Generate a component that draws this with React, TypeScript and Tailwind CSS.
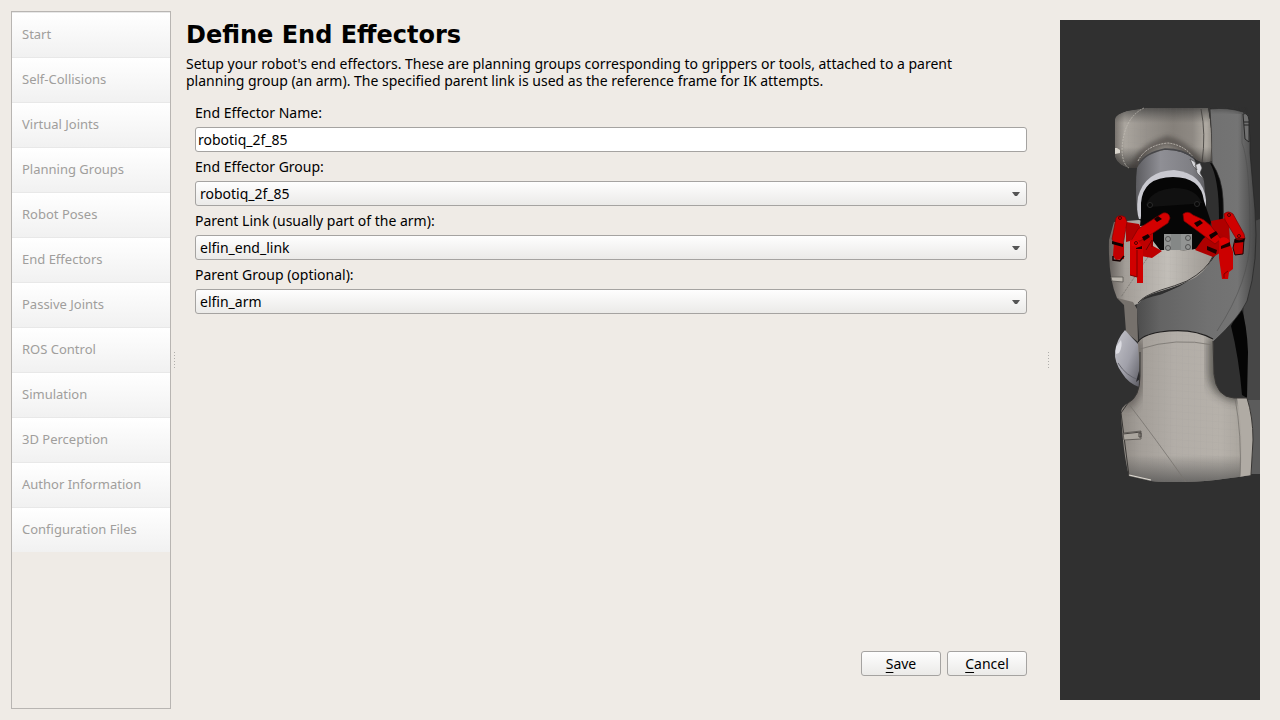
import React from "react";

const steps = [
  "Start",
  "Self-Collisions",
  "Virtual Joints",
  "Planning Groups",
  "Robot Poses",
  "End Effectors",
  "Passive Joints",
  "ROS Control",
  "Simulation",
  "3D Perception",
  "Author Information",
  "Configuration Files",
];

function SplitHandle() {
  return (
    <div className="flex w-[6px] shrink-0 flex-col items-center justify-center gap-[2px]" aria-hidden="true">
      {[0, 1, 2, 3, 4, 5].map((i) => (
        <span key={i} className="size-px bg-[#b0aeab]" />
      ))}
    </div>
  );
}

function SelectField({ id, label, value }: { id: string; label: string; value: string }) {
  return (
    <>
      <label htmlFor={id}>{label}</label>
      <div className="relative">
        <select
          id={id}
          defaultValue={value}
          className="block h-[25px] w-full appearance-none rounded-[3px] border border-[#a5a3a1] bg-linear-to-b from-[#fefefe] to-[#ebeae8] pl-1 pr-6 text-sm leading-[17px]"
        >
          <option>{value}</option>
        </select>
        <svg className="pointer-events-none absolute right-[6px] top-[11px]" width="10" height="5" viewBox="0 0 10 5">
          <path d="M1 0H9L6 4H4Z" fill="#555" />
        </svg>
      </div>
    </>
  );
}

function DialogButton({ mnemonic, rest }: { mnemonic: string; rest: string }) {
  return (
    <button
      type="button"
      className="h-[25px] w-20 rounded-[3px] border border-[#a5a3a1] bg-linear-to-b from-[#fefefe] to-[#ebeae8] leading-[17px]"
    >
      <span className="underline underline-offset-3">{mnemonic}</span>
      {rest}
    </button>
  );
}

const wristPath =
  "M1115 119Q1116 114 1127 111L1147 108H1208Q1213 132 1212 161Q1202 165 1194 158Q1184 150 1168 150Q1150 153 1137 168H1129Q1118 165 1115 157Z";
const housingPath =
  "M1114 222L1139 220L1200 246L1216 247Q1211 267 1196 277Q1182 285 1161 291Q1143 296 1139 303L1133 306L1117 298Q1108 278 1109 240Z";
const basePath =
  "M1138 342Q1142 335 1160 332Q1192 327 1213 339L1214 374Q1216 397 1234 398L1247 398Q1253 417 1253 440L1251 475Q1225 479 1205 481Q1169 483 1151 481L1129 476Q1123 453 1121 413Q1121 407 1128 403Q1140 397 1140 376Z";

function RobotView() {
  return (
    <svg className="h-full w-full" viewBox="1060 20 200 680" preserveAspectRatio="xMidYMid slice" role="img" aria-label="Robot model">
      <defs>
        <linearGradient id="g-wrist" x1="0" x2="1">
          <stop offset="0" stopColor="#77726d" />
          <stop offset=".1" stopColor="#aaa59e" />
          <stop offset=".32" stopColor="#96918b" />
          <stop offset=".6" stopColor="#85807a" />
          <stop offset=".8" stopColor="#8e8983" />
          <stop offset=".94" stopColor="#b0aba3" />
          <stop offset="1" stopColor="#938e87" />
        </linearGradient>
        <linearGradient id="g-wrist-shade" x1="0" y1="0" x2="0" y2="1">
          <stop offset="0" stopColor="#333" stopOpacity=".65" />
          <stop offset=".25" stopColor="#444" stopOpacity="0" />
          <stop offset=".65" stopColor="#222" stopOpacity="0" />
          <stop offset="1" stopColor="#111" stopOpacity=".65" />
        </linearGradient>
        <linearGradient id="g-silver" x1="0" x2="1">
          <stop offset="0" stopColor="#5c5c60" />
          <stop offset=".35" stopColor="#8f8f95" />
          <stop offset=".8" stopColor="#7f7f84" />
          <stop offset="1" stopColor="#5c5c60" />
        </linearGradient>
        <linearGradient id="g-forearm" gradientUnits="userSpaceOnUse" x1="1136" y1="0" x2="1257" y2="0">
          <stop offset="0" stopColor="#4c4c4c" />
          <stop offset=".2" stopColor="#646464" />
          <stop offset=".6" stopColor="#717171" />
          <stop offset=".84" stopColor="#747474" />
          <stop offset="1" stopColor="#444" />
        </linearGradient>
        <linearGradient id="g-housing" x1="0" x2="1">
          <stop offset="0" stopColor="#66615d" />
          <stop offset=".15" stopColor="#a29d97" />
          <stop offset=".55" stopColor="#c2beb8" />
          <stop offset="1" stopColor="#98938d" />
        </linearGradient>
        <linearGradient id="g-base" gradientUnits="userSpaceOnUse" x1="1121" y1="0" x2="1254" y2="0">
          <stop offset="0" stopColor="#8e8983" />
          <stop offset=".14" stopColor="#a39e98" />
          <stop offset=".4" stopColor="#b2ada7" />
          <stop offset=".75" stopColor="#b6b1aa" />
          <stop offset="1" stopColor="#a39e97" />
        </linearGradient>
        <linearGradient id="g-base-low" gradientUnits="userSpaceOnUse" x1="0" y1="455" x2="0" y2="482">
          <stop offset="0" stopColor="#444" stopOpacity="0" />
          <stop offset="1" stopColor="#444" stopOpacity=".65" />
        </linearGradient>
        <linearGradient id="g-ball" x1="0" y1="0" x2="1" y2="1">
          <stop offset="0" stopColor="#c6c6cc" />
          <stop offset=".55" stopColor="#a0a0a9" />
          <stop offset="1" stopColor="#5d5d64" />
        </linearGradient>
        <pattern id="p-mesh" width="6" height="7" patternUnits="userSpaceOnUse" patternTransform="skewY(4)">
          <path d="M0 0H6M0 0V7" stroke="#77726d" strokeWidth=".3" opacity=".25" fill="none" />
        </pattern>
        <filter id="f-soft" x="-30%" y="-30%" width="160%" height="160%">
          <feGaussianBlur stdDeviation="5" />
        </filter>
        <filter id="f-edge" x="-30%" y="-30%" width="160%" height="160%">
          <feGaussianBlur stdDeviation="2" />
        </filter>
        <clipPath id="c-base">
          <path d={basePath} />
        </clipPath>
        <clipPath id="c-wrist">
          <path d={wristPath} />
        </clipPath>
      </defs>

      {/* rear structure */}
      <path d="M1252 222L1260 219V474H1249L1243 294Z" fill="#474747" />
      <path d="M1247 400H1260V474H1250Z" fill="#5c5c5c" />
      <path d="M1231 326L1241 306Q1247 325 1248 352L1247 398L1242 395Q1239 358 1231 326Z" fill="#050505" />
      <path d="M1210 163Q1219 178 1219 218L1216 250L1226 245V165Z" fill="#080808" />

      {/* forearm */}
      <path d="M1210 109Q1228 107 1243 112Q1249 114 1250 138V153L1255 210Q1259 262 1247 301Q1239 318 1213 342Q1191 327 1161 333Q1145 336 1139 343L1136 303Q1143 298 1161 294Q1201 279 1216 254Q1225 235 1223 199Q1222 178 1212 163Z" fill="url(#g-forearm)" stroke="#252525" strokeWidth=".7" />
      <path d="M1211 109Q1228 107 1243 112" fill="none" stroke="#333" strokeWidth="4" opacity=".5" filter="url(#f-edge)" />
      <path d="M1242 113V143Q1250 162 1250 237Q1250 281 1217 331" fill="none" stroke="#4a4a4a" strokeWidth="1" opacity=".5" />
      <path d="M1243 114Q1248 112 1249 120V142L1245 139Z" fill="#707070" stroke="#292929" strokeWidth="1" />
      <path d="M1244 122H1249M1244 125H1249" stroke="#222" />

      {/* wrist housing */}
      <g clipPath="url(#c-wrist)">
        <path d={wristPath} fill="url(#g-wrist)" />
        <path d={wristPath} fill="url(#g-wrist-shade)" />
        <path d={wristPath} fill="url(#p-mesh)" />
        <path d="M1134 172Q1136 150 1167 140Q1188 145 1202 168" fill="none" stroke="#3c3936" strokeWidth="8" opacity=".5" filter="url(#f-edge)" />
      </g>
      <path d="M1144 108Q1123 118 1122 151Q1123 165 1129 168" fill="none" stroke="#c6c1b9" strokeWidth=".7" strokeDasharray="2 1" />
      <path d="M1201 109Q1206 133 1202 163M1209 108Q1213 132 1211 163" fill="none" stroke="#3e3b38" strokeWidth=".8" />
      <path d="M1115 148H1117L1120 150V153L1115 154Z" fill="#d8d4cc" />
      <path d="M1138 161Q1146 145 1168 143Q1184 145 1193 157" fill="none" stroke="#d1ccc4" strokeWidth=".8" strokeDasharray="2 1" />

      {/* tool flange */}
      <path d="M1137 168Q1144 154 1164 150Q1182 149 1194 159L1204 181L1206 203L1137 210Q1135 184 1137 168Z" fill="url(#g-silver)" />
      <path d="M1139 164Q1145 153 1165 149Q1183 149 1194 158" fill="none" stroke="#47474a" strokeWidth="1.5" />
      <path d="M1139 219Q1136 211 1138 197Q1145 171 1174 170Q1203 173 1206 200V212L1200 218Z" fill="#c9c9d0" />
      <path d="M1190 159L1195 162L1197 170L1193 166ZM1195 165L1200 163L1202 168L1200 173L1204 180L1197 173Z" fill="#d7d7db" stroke="#444" strokeWidth=".6" />

      {/* middle joint housing */}
      <path d={housingPath} fill="url(#g-housing)" />
      <path d={housingPath} fill="url(#p-mesh)" />
      <path d="M1213 256Q1207 270 1187 281Q1175 286 1161 290Q1143 296 1138 303" fill="none" stroke="#3c3a39" />
      <path d="M1148 257Q1138 272 1121 297" fill="none" stroke="#6f6b66" strokeWidth=".7" strokeDasharray="2 1" />
      <path d="M1111 277L1123 277V282L1112 281Z" fill="#bbb6ae" stroke="#5c5854" strokeWidth=".8" />
      <path d="M1129 237L1137 233L1142 241L1134 244Z" fill="#d5d0c8" />

      {/* elbow behind the column */}
      <path d="M1117 298L1133 302L1137 309L1138 342L1126 332L1124 305Z" fill="#76716c" />
      <path d="M1125 330Q1132 338 1139 345V387Q1128 383 1122 373Q1114 362 1115 351Q1117 339 1125 330Z" fill="url(#g-ball)" />
      <path d="M1116 347L1121 340Q1123 346 1119 353L1116 354Z" fill="#dcdce2" />
      <path d="M1118 363Q1126 376 1139 380" fill="none" stroke="#65656c" strokeWidth="1" />
      <path d="M1139 371L1136 382L1140 379Z" fill="#29292c" />

      {/* base joint */}
      <g clipPath="url(#c-base)">
        <rect x="1118" y="325" width="140" height="160" fill="url(#g-base)" />
        <path d="M1138 340V376Q1138 399 1124 405" fill="none" stroke="#3c3936" strokeWidth="10" opacity=".6" filter="url(#f-soft)" />
        <path d="M1215 338V374Q1217 396 1250 396" fill="none" stroke="#33302e" strokeWidth="12" opacity=".75" filter="url(#f-soft)" />
        <rect x="1118" y="450" width="140" height="34" fill="url(#g-base-low)" />
        <rect x="1118" y="325" width="140" height="160" fill="url(#p-mesh)" />
        <path d="M1237 398Q1244 435 1240 478H1254V398Z" fill="#b0aba4" />
        <path d="M1140 349Q1176 337 1213 345M1128 403Q1155 438 1186 482M1235 398Q1242 435 1240 478" fill="none" stroke="#77736e" strokeWidth=".8" />
      </g>
      <path d="M1138 342Q1142 335 1160 332Q1192 327 1213 339" fill="none" stroke="#201f1f" strokeWidth="1.2" />
      <path d="M1213 341L1214 374Q1216 397 1234 398L1247 398Q1253 417 1253 440L1251 475M1140 352V376Q1140 397 1128 403L1121 413L1129 476" fill="none" stroke="#383634" strokeWidth="1" />
      <path d="M1123 433L1141 431V439L1124 440Z" fill="#aaa59e" stroke="#54504d" strokeWidth=".8" />
      <path d="M1123 434L1141 432M1139 433H1141V437H1139Z" stroke="#4a4643" fill="none" />
      <path d="M1129 475L1151 480" stroke="#dedad2" strokeWidth="1.2" />

      {/* gripper body */}
      <path d="M1141 216V203Q1143 177 1173 177Q1201 177 1204 201L1211 222L1206 244Q1199 251 1179 250H1160L1153 241V225L1140 226Z" fill="#060606" />
      <path d="M1146 205Q1151 190 1174 188Q1196 188 1202 203L1193 204L1149 207Z" fill="#111" />
      <circle cx="1150" cy="205" r="2.5" fill="#080808" stroke="#2a2a2a" />
      <circle cx="1197" cy="204" r="2.5" fill="#080808" stroke="#2a2a2a" />
      <rect x="1164" y="234" width="28" height="16" fill="#929493" />
      <path d="M1171 234H1181V250H1171Z" fill="#858887" />
      <g fill="none" stroke="#444" strokeWidth=".8">
        <circle cx="1168" cy="239" r="2.5" />
        <circle cx="1188" cy="238" r="2.5" />
        <circle cx="1168" cy="248" r="2.5" />
        <circle cx="1188" cy="247" r="2.5" />
      </g>

      {/* left finger */}
      <path d="M1126 222L1139 224L1142 231L1134 240L1126 242Z" fill="#b00000" />
      <path d="M1114 241L1124 243L1124 259L1116 260L1113 256Z" fill="#c00000" />
      <path d="M1116 218Q1119 214 1125 217L1127 222L1123 245L1114 243L1112 239Z" fill="#ce0000" stroke="#850000" strokeWidth=".7" />
      <path d="M1112 241L1123 244V247L1112 244Z" fill="#090000" />
      <path d="M1113 256V260L1120 261L1124 256" fill="none" stroke="#160000" strokeWidth="1.5" />
      <path d="M1130 242L1140 234L1153 232L1153 246L1162 251L1152 258L1141 256L1132 247Z" fill="#bd0000" />
      <path d="M1138 229L1155 218L1163 213Q1169 212 1170 218L1168 223L1153 233L1140 241L1131 241Z" fill="#d40000" stroke="#800000" strokeWidth=".7" />
      <path d="M1154 219L1158 216L1162 219L1157 222ZM1142 237L1148 234L1150 237L1144 241Z" fill="#140000" />
      <path d="M1130 240L1137 239L1143 247V283H1137V277L1130 275Z" fill="#d00000" />
      <path d="M1131 242Q1135 238 1139 242L1141 247L1132 246Z" fill="#e20000" />
      <path d="M1136 248L1142 246V249H1136Z" fill="#200000" />
      <path d="M1130 275L1137 277V250" fill="none" stroke="#7a0000" />
      <path d="M1146 250L1152 240V247" fill="none" stroke="#700000" />
      <circle cx="1120" cy="218" r="1.5" fill="none" stroke="#500000" />
      <circle cx="1136" cy="243" r="1.5" fill="none" stroke="#500000" />

      {/* right finger */}
      <path d="M1211 221L1226 218L1229 224L1230 242L1214 241Z" fill="#b00000" />
      <path d="M1203 239L1214 229L1226 237L1225 250L1213 257L1195 250Z" fill="#ad0000" />
      <path d="M1183 214Q1188 210 1193 215L1204 220L1211 226L1221 239L1215 244L1195 229L1184 221Z" fill="#d40000" stroke="#800000" strokeWidth=".7" />
      <path d="M1194 223L1200 220L1203 223L1197 227ZM1209 235L1216 231L1218 234L1211 239Z" fill="#140000" />
      <path d="M1224 214Q1228 210 1233 214L1244 234L1245 239L1237 240L1225 220Z" fill="#d10000" stroke="#800000" strokeWidth=".7" />
      <path d="M1235 239L1244 239L1243 254L1235 255L1233 248Z" fill="#c20000" stroke="#200000" />
      <path d="M1235 239Q1240 242 1245 238L1244 242L1235 243Z" fill="#090000" />
      <path d="M1219 239L1229 240L1233 252V269L1229 272L1228 279H1222L1219 258Z" fill="#cc0000" />
      <path d="M1219 239Q1225 235 1229 240L1227 246L1221 246Z" fill="#df0000" />
      <path d="M1221 246L1230 242V246L1221 249ZM1207 246L1217 250L1216 254L1207 250Z" fill="#200000" />
      <path d="M1228 271L1224 274V278" fill="none" stroke="#7a0000" />
      <circle cx="1229" cy="215" r="1.5" fill="none" stroke="#500000" />
      <circle cx="1239" cy="236" r="1.5" fill="none" stroke="#500000" />
    </svg>
  );
}

export default function App() {
  return (
    <div className="flex min-h-screen bg-[#efebe6] py-[11px] pl-[11px] pr-5 font-['Noto_Sans','Open_Sans',sans-serif] text-sm leading-[17px] text-black">
      <nav className="w-40 shrink-0 border border-[#b8b5b2]" aria-label="Setup steps">
        <ul>
          {steps.map((step) => (
            <li key={step}>
              <button
                type="button"
                disabled
                className="block h-[45px] w-full border-t border-[#e8e8e8] bg-linear-to-b from-white to-[#f1f1f1] px-[10px] pb-px text-left text-[13px] text-[#a09e9c]"
              >
                {step}
              </button>
            </li>
          ))}
        </ul>
      </nav>
      <SplitHandle />
      <main className="flex min-w-0 flex-1 flex-col px-[9px] pb-[33px] pt-[10px]">
        <h1 className="font-['DejaVu_Sans',sans-serif] text-2xl font-bold leading-7">Define End Effectors</h1>
        <p className="mt-[6px]">
          Setup your robot's end effectors. These are planning groups corresponding to grippers or tools, attached to a parent
          <br />
          planning group (an arm). The specified parent link is used as the reference frame for IK attempts.
        </p>
        <form className="flex flex-1 flex-col gap-1.5 px-[9px] pt-[15px]" onSubmit={(e) => e.preventDefault()}>
          <label htmlFor="effector-name">End Effector Name:</label>
          <input
            id="effector-name"
            type="text"
            defaultValue="robotiq_2f_85"
            className="h-[25px] w-full rounded-[3px] border border-[#a5a3a1] bg-white px-[2px] text-sm leading-[17px]"
          />
          <SelectField id="effector-group" label="End Effector Group:" value="robotiq_2f_85" />
          <SelectField id="parent-link" label="Parent Link (usually part of the arm):" value="elfin_end_link" />
          <SelectField id="parent-group" label="Parent Group (optional):" value="elfin_arm" />
          <div className="mt-auto flex justify-end gap-1.5">
            <DialogButton mnemonic="S" rest="ave" />
            <DialogButton mnemonic="C" rest="ancel" />
          </div>
        </form>
      </main>
      <SplitHandle />
      <section className="my-[9px] ml-[9px] w-[200px] shrink-0 bg-[#303030]" aria-label="Robot preview">
        <RobotView />
      </section>
    </div>
  );
}
